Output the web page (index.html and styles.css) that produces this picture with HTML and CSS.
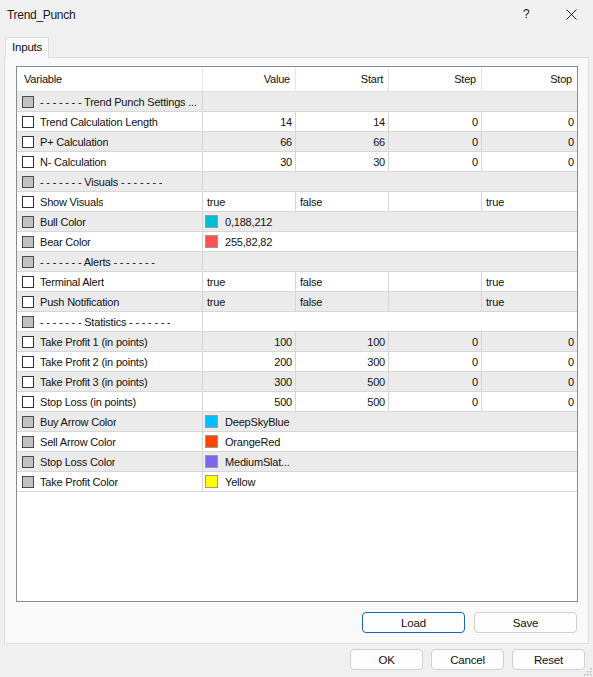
FILE: index.html
```html
<!DOCTYPE html>
<html>
<head>
<meta charset="utf-8">
<link rel="stylesheet" href="styles.css">
</head>
<body>
<div class="window">
  <div class="titlebar">
    <span class="title">Trend_Punch</span>
    <span class="help">?</span>
    <svg class="close" width="11" height="11" viewBox="0 0 11 11"><path d="M0.5 0.5 L10.5 10.5 M10.5 0.5 L0.5 10.5" stroke="#1a1a1a" stroke-width="1" fill="none"/></svg>
  </div>
  <div class="tabs"><div class="tab">Inputs</div></div>
  <div class="panel">
    <div class="frame">
      <div class="row head">
        <div class="c var">Variable</div>
        <div class="c num">Value</div>
        <div class="c num">Start</div>
        <div class="c num">Step</div>
        <div class="c num last">Stop</div>
      </div>

      <div class="row alt">
        <div class="c var"><span class="cb grey"></span><span class="lbl">- - - - - - - Trend Punch Settings ...</span></div>
        <div class="c span"></div>
      </div>
      <div class="row">
        <div class="c var"><span class="cb"></span><span class="lbl">Trend Calculation Length</span></div>
        <div class="c num">14</div><div class="c num">14</div><div class="c num">0</div><div class="c num last">0</div>
      </div>
      <div class="row alt">
        <div class="c var"><span class="cb"></span><span class="lbl">P+ Calculation</span></div>
        <div class="c num">66</div><div class="c num">66</div><div class="c num">0</div><div class="c num last">0</div>
      </div>
      <div class="row">
        <div class="c var"><span class="cb"></span><span class="lbl">N- Calculation</span></div>
        <div class="c num">30</div><div class="c num">30</div><div class="c num">0</div><div class="c num last">0</div>
      </div>
      <div class="row alt">
        <div class="c var"><span class="cb grey"></span><span class="lbl">- - - - - - - Visuals - - - - - - -</span></div>
        <div class="c span"></div>
      </div>
      <div class="row">
        <div class="c var"><span class="cb"></span><span class="lbl">Show Visuals</span></div>
        <div class="c txt">true</div><div class="c txt">false</div><div class="c txt"></div><div class="c txt last">true</div>
      </div>
      <div class="row alt">
        <div class="c var"><span class="cb grey"></span><span class="lbl">Bull Color</span></div>
        <div class="c span clr"><span class="sw" style="background:rgb(0,188,212)"></span>0,188,212</div>
      </div>
      <div class="row">
        <div class="c var"><span class="cb grey"></span><span class="lbl">Bear Color</span></div>
        <div class="c span clr"><span class="sw" style="background:rgb(255,82,82)"></span>255,82,82</div>
      </div>
      <div class="row alt">
        <div class="c var"><span class="cb grey"></span><span class="lbl">- - - - - - - Alerts - - - - - - -</span></div>
        <div class="c span"></div>
      </div>
      <div class="row">
        <div class="c var"><span class="cb"></span><span class="lbl">Terminal Alert</span></div>
        <div class="c txt">true</div><div class="c txt">false</div><div class="c txt"></div><div class="c txt last">true</div>
      </div>
      <div class="row alt">
        <div class="c var"><span class="cb"></span><span class="lbl">Push Notification</span></div>
        <div class="c txt">true</div><div class="c txt">false</div><div class="c txt"></div><div class="c txt last">true</div>
      </div>
      <div class="row">
        <div class="c var"><span class="cb grey"></span><span class="lbl">- - - - - - - Statistics - - - - - - -</span></div>
        <div class="c span"></div>
      </div>
      <div class="row alt">
        <div class="c var"><span class="cb"></span><span class="lbl">Take Profit 1 (in points)</span></div>
        <div class="c num">100</div><div class="c num">100</div><div class="c num">0</div><div class="c num last">0</div>
      </div>
      <div class="row">
        <div class="c var"><span class="cb"></span><span class="lbl">Take Profit 2 (in points)</span></div>
        <div class="c num">200</div><div class="c num">300</div><div class="c num">0</div><div class="c num last">0</div>
      </div>
      <div class="row alt">
        <div class="c var"><span class="cb"></span><span class="lbl">Take Profit 3 (in points)</span></div>
        <div class="c num">300</div><div class="c num">500</div><div class="c num">0</div><div class="c num last">0</div>
      </div>
      <div class="row">
        <div class="c var"><span class="cb"></span><span class="lbl">Stop Loss (in points)</span></div>
        <div class="c num">500</div><div class="c num">500</div><div class="c num">0</div><div class="c num last">0</div>
      </div>
      <div class="row alt">
        <div class="c var"><span class="cb grey"></span><span class="lbl">Buy Arrow Color</span></div>
        <div class="c span clr"><span class="sw" style="background:#00bfff"></span>DeepSkyBlue</div>
      </div>
      <div class="row">
        <div class="c var"><span class="cb grey"></span><span class="lbl">Sell Arrow Color</span></div>
        <div class="c span clr"><span class="sw" style="background:#ff4500"></span>OrangeRed</div>
      </div>
      <div class="row alt">
        <div class="c var"><span class="cb grey"></span><span class="lbl">Stop Loss Color</span></div>
        <div class="c span clr"><span class="sw" style="background:#7b68ee"></span>MediumSlat...</div>
      </div>
      <div class="row">
        <div class="c var"><span class="cb grey"></span><span class="lbl">Take Profit Color</span></div>
        <div class="c span clr"><span class="sw" style="background:#ffff00"></span>Yellow</div>
      </div>
    </div>
    <div class="panel-buttons">
      <button class="btn wide focus">Load</button>
      <button class="btn wide">Save</button>
    </div>
  </div>
  <div class="dialog-buttons">
    <button class="btn">OK</button>
    <button class="btn">Cancel</button>
    <button class="btn">Reset</button>
  </div>
  <svg class="grip" width="9" height="9" viewBox="0 0 9 9">
    <rect x="7" y="1" width="1.5" height="1.5" fill="#b8b8b8"/>
    <rect x="4" y="4" width="1.5" height="1.5" fill="#b8b8b8"/>
    <rect x="7" y="4" width="1.5" height="1.5" fill="#b8b8b8"/>
    <rect x="1" y="7" width="1.5" height="1.5" fill="#b8b8b8"/>
    <rect x="4" y="7" width="1.5" height="1.5" fill="#b8b8b8"/>
    <rect x="7" y="7" width="1.5" height="1.5" fill="#b8b8b8"/>
  </svg>
</div>
</body>
</html>
```

FILE: styles.css
```css
html, body {
  margin: 0;
  padding: 0;
}
body {
  width: 593px;
  height: 677px;
  background: #f0f0f0;
  font-family: "Liberation Sans", Arial, sans-serif;
  font-size: 11px;
  letter-spacing: -0.2px;
  color: #111;
  overflow: hidden;
}
.window {
  position: relative;
  width: 593px;
  height: 677px;
}
.titlebar {
  height: 28px;
  display: flex;
  align-items: center;
  padding-left: 7px;
  box-sizing: border-box;
}
.title {
  font-size: 12px;
  letter-spacing: -0.3px;
  flex: 1;
  color: #1a1a1a;
  padding-top: 1px;
}
.help {
  font-size: 12px;
  width: 10px;
  margin-right: 33px;
  color: #1a1a1a;
}
.close {
  margin-right: 16px;
}
.tabs {
  height: 29px;
  padding-top: 8px;
  padding-left: 5px;
  box-sizing: border-box;
  display: flex;
  align-items: flex-end;
}
.tab {
  width: 44px;
  height: 21px;
  box-sizing: border-box;
  border: 1px solid #dedede;
  border-bottom: none;
  background: #f9f9f9;
  padding-left: 6px;
  padding-top: 3px;
  font-size: 11.5px;
  position: relative;
  top: 1px;
}
.panel {
  margin-left: 4px;
  width: 585px;
  height: 587px;
  box-sizing: border-box;
  border: 1px solid #dedede;
  background: #f9f9f9;
  padding: 8px 10px 0 11px;
}
.frame {
  width: 562px;
  height: 536px;
  box-sizing: border-box;
  border: 1px solid #878b93;
  background: #fff;
}
.row {
  display: grid;
  grid-template-columns: 186px 93px 93px 93px 95px;
  height: 20px;
  box-sizing: border-box;
  border-bottom: 1px solid #d6d6d6;
}
.row.alt {
  background: #ebebeb;
}
.row.head {
  height: 25px;
  background: #fff;
  border-bottom: 1px solid #e3e3e3;
}
.c {
  box-sizing: border-box;
  border-right: 1px solid #d6d6d6;
  display: flex;
  align-items: center;
  white-space: nowrap;
  overflow: hidden;
}
.head .c {
  border-right-color: #e6e6e6;
}
.c.last {
  border-right: none;
}
.c.var {
  padding-left: 5px;
}
.head .c.var {
  padding-left: 7px;
}
.c.num {
  justify-content: flex-end;
  padding-right: 3px;
}
.head .c.num {
  padding-right: 5px;
}
.c.txt {
  padding-left: 4px;
}
.c.span {
  grid-column: 2 / -1;
  border-right: none;
}
.c.clr {
  padding-left: 2px;
}
.cb {
  flex: none;
  width: 12px;
  height: 12px;
  box-sizing: border-box;
  border: 1px solid #333;
  background: #fff;
  margin-right: 6px;
}
.cb.grey {
  background: #c2c2c2;
  border-color: #4a4a4a;
}
.lbl {
  overflow: hidden;
  text-overflow: ellipsis;
}
.sw {
  flex: none;
  width: 13px;
  height: 13px;
  box-sizing: border-box;
  border: 1px solid #9a9a9a;
  margin-right: 7px;
}
.panel-buttons {
  display: flex;
  justify-content: flex-end;
  gap: 9px;
  margin-top: 10px;
  padding-right: 1px;
}
.btn {
  font-family: "Liberation Sans", Arial, sans-serif;
  font-size: 11.5px;
  letter-spacing: -0.2px;
  color: #111;
  width: 73px;
  height: 21px;
  box-sizing: border-box;
  border: 1px solid #d0d0d0;
  border-radius: 4px;
  background: #fdfdfd;
  padding: 0;
  margin: 0;
}
.btn.wide {
  width: 103px;
}
.btn.focus {
  border-color: #1867b4;
}
.dialog-buttons {
  display: flex;
  justify-content: flex-end;
  gap: 8px;
  margin-top: 5px;
  padding-right: 8px;
}
.grip {
  position: absolute;
  right: 1px;
  bottom: 1px;
}
```
